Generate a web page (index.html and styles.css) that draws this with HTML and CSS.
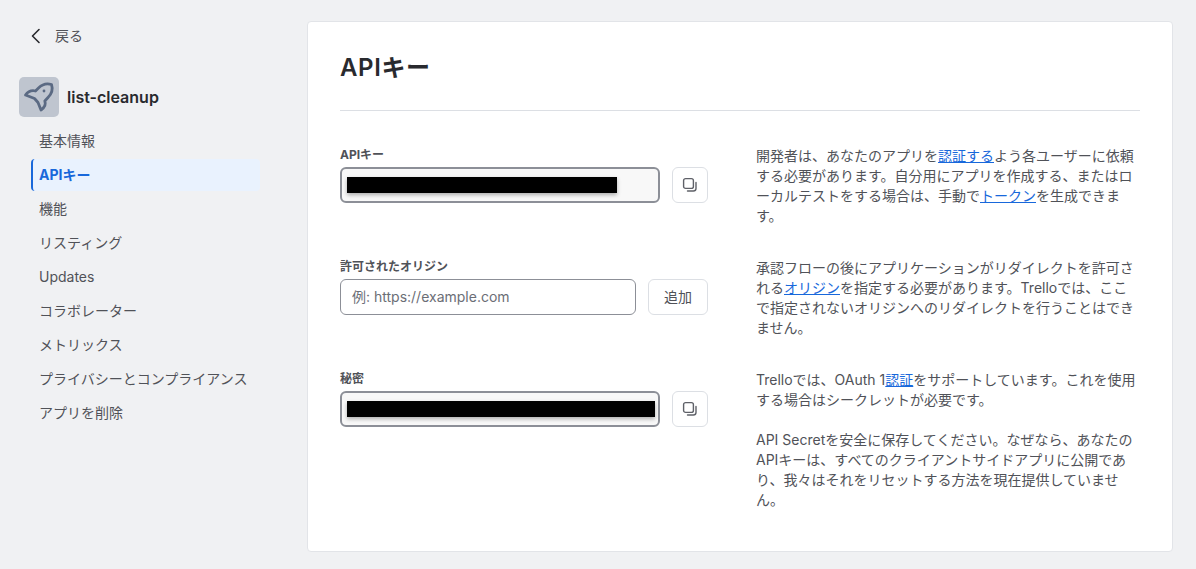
FILE: index.html
```html
<!DOCTYPE html>
<html lang="ja">
<head>
<meta charset="utf-8">
<title>APIキー</title>
<link rel="stylesheet" href="styles.css">
</head>
<body>
<div class="page">
  <aside class="sidebar">
    <a class="back">
      <svg class="back-icon" width="12" height="18" viewBox="0 0 12 18"><path d="M9 2.5 2.5 9 9 15.5" fill="none" stroke="#292a2e" stroke-width="1.6" stroke-linecap="round" stroke-linejoin="round"/></svg>
      <span>戻る</span>
    </a>
    <div class="app">
      <div class="tile">
        <svg width="40" height="40" viewBox="0 0 40 40"><path d="M32.5 7.5C28 6 23 7.5 19.5 11L16.5 14C13 13.2 9 14.5 6.5 18L15.5 21.5 19 25.5 22 33C25.5 30.5 27 27 25.8 24L29 20.5C32.5 17 34 12 32.5 7.5Z" fill="none" stroke="#5b6a83" stroke-width="2.8" stroke-linejoin="round"/><circle cx="25" cy="14" r="1.4" fill="#5b6a83"/></svg>
      </div>
      <div class="app-name">list-cleanup</div>
    </div>
    <nav class="nav">
      <a class="nav-item">基本情報</a>
      <a class="nav-item active">APIキー</a>
      <a class="nav-item">機能</a>
      <a class="nav-item">リスティング</a>
      <a class="nav-item">Updates</a>
      <a class="nav-item">コラボレーター</a>
      <a class="nav-item">メトリックス</a>
      <a class="nav-item">プライバシーとコンプライアンス</a>
      <a class="nav-item">アプリを削除</a>
    </nav>
  </aside>
  <main class="panel">
    <h1 class="title">APIキー</h1>
    <hr class="rule">
    <div class="rows">
      <section class="row">
        <div class="field">
          <label class="label">APIキー</label>
          <div class="controls">
            <div class="secret"><span class="mask mask-key"></span></div>
            <button class="btn icon-btn"><svg width="16" height="16" viewBox="0 0 16 16"><rect x="1.6" y="1.6" width="9.8" height="9.8" rx="2" fill="none" stroke="#5f6168" stroke-width="1.4"/><path d="M14 5.5V11.5A2.6 2.6 0 0 1 11.4 14H5.5" fill="none" stroke="#5f6168" stroke-width="1.4" stroke-linecap="round"/></svg></button>
          </div>
        </div>
        <div class="help">
          <p>開発者は、あなたのアプリを<a>認証する</a>よう各ユーザーに依頼する必要があります。自分用にアプリを作成する、またはローカルテストをする場合は、手動で<a>トークン</a>を生成できます。</p>
        </div>
      </section>
      <section class="row">
        <div class="field">
          <label class="label">許可されたオリジン</label>
          <div class="controls">
            <input class="origin" type="text" placeholder="例: https://example.com">
            <button class="btn text-btn">追加</button>
          </div>
        </div>
        <div class="help">
          <p>承認フローの後にアプリケーションがリダイレクトを許可される<a>オリジン</a>を指定する必要があります。Trelloでは、ここで指定されないオリジンへのリダイレクトを行うことはできません。</p>
        </div>
      </section>
      <section class="row">
        <div class="field">
          <label class="label">秘密</label>
          <div class="controls">
            <div class="secret"><span class="mask mask-secret"></span></div>
            <button class="btn icon-btn"><svg width="16" height="16" viewBox="0 0 16 16"><rect x="1.6" y="1.6" width="9.8" height="9.8" rx="2" fill="none" stroke="#5f6168" stroke-width="1.4"/><path d="M14 5.5V11.5A2.6 2.6 0 0 1 11.4 14H5.5" fill="none" stroke="#5f6168" stroke-width="1.4" stroke-linecap="round"/></svg></button>
          </div>
        </div>
        <div class="help">
          <p>Trelloでは、OAuth 1<a>認証</a>をサポートしています。これを使用する場合はシークレットが必要です。</p>
          <p class="gap">API Secretを安全に保存してください。なぜなら、あなたのAPIキーは、すべてのクライアントサイドアプリに公開であり、我々はそれをリセットする方法を現在提供していません。</p>
        </div>
      </section>
    </div>
  </main>
</div>
</body>
</html>
```
FILE: styles.css
```css
* { box-sizing: border-box; }
html, body { margin: 0; height: 100%; }
body {
  background: #f0f1f3;
  color: #505258;
  font-family: Inter, "Noto Sans CJK JP", sans-serif;
  font-size: 14px;
  line-height: 20px;
  overflow: hidden;
}
.page { display: flex; height: 569px; padding: 21px 23px 17px 0; }
.sidebar { width: 307px; flex: none; padding: 5px 46px 0 19px; }
.back { display: flex; align-items: center; height: 20px; padding-left: 11px; gap: 13px; }
.back-icon { flex: none; }
.app { display: flex; align-items: center; gap: 8px; margin-top: 31px; }
.tile {
  width: 40px; height: 40px; background: #bfc5cf; border-radius: 5px;
  display: flex;
}
.app-name { color: #292a2e; font-size: 16px; font-weight: 600; }
.nav { display: flex; flex-direction: column; gap: 2px; margin: 8px 1px 0 12px; }
.nav-item { display: block; height: 32px; line-height: 32px; padding-left: 8px; border-radius: 4px; white-space: nowrap; }
.nav-item.active {
  background: #e9f2fe; color: #1868db; font-weight: 700;
  border-left: 2px solid #1868db; padding-left: 6px;
}
.panel {
  flex: 1; background: #fff; border: 1px solid #e2e4e8; border-radius: 4px;
  padding: 25px 32px 0;
}
.title { margin: 0; color: #292a2e; font-size: 24px; line-height: 42px; font-weight: 600; letter-spacing: .6px; }
.rule { margin: 21px 0 35px; border: 0; border-top: 1px solid #dcdfe4; }
.rows { display: flex; flex-direction: column; gap: 32px; }
.row { display: grid; grid-template-columns: 368px 384px; gap: 48px; }
.label { display: block; font-size: 12px; font-weight: 700; line-height: 16px; margin: 1px 0 4px; }
.controls { display: flex; gap: 12px; }
.secret {
  flex: 1; height: 36px; background: #f8f8f8; border: 2px solid #8c8f97; border-radius: 6px;
  padding: 8px 3px 0 5px;
}
.mask { display: block; height: 16px; background: #000; box-shadow: 0 2px 4px rgba(0,0,0,.3); }
.mask-key { width: 270px; }
.mask-secret { width: 308px; }
.origin {
  flex: 1; min-width: 0; height: 36px; background: #fff; border: 1px solid #8c8f97; border-radius: 6px;
  padding: 0 11px 2px; font: 14px/20px Inter, "Noto Sans CJK JP", sans-serif; color: #292a2e;
}
.origin::placeholder { color: #6b6e76; opacity: 1; }
.btn {
  height: 36px; background: #fff; border: 1px solid #dcdfe4; border-radius: 6px; padding: 0;
  display: flex; align-items: center; justify-content: center; flex: none;
  color: #505258; font: 14px/20px Inter, "Noto Sans CJK JP", sans-serif;
}
.icon-btn { width: 36px; }
.text-btn { width: 60px; }
.help p { margin: 0; line-break: loose; }
.help p.gap { margin-top: 20px; }
.help a { color: #1868db; text-decoration: underline; }
```
